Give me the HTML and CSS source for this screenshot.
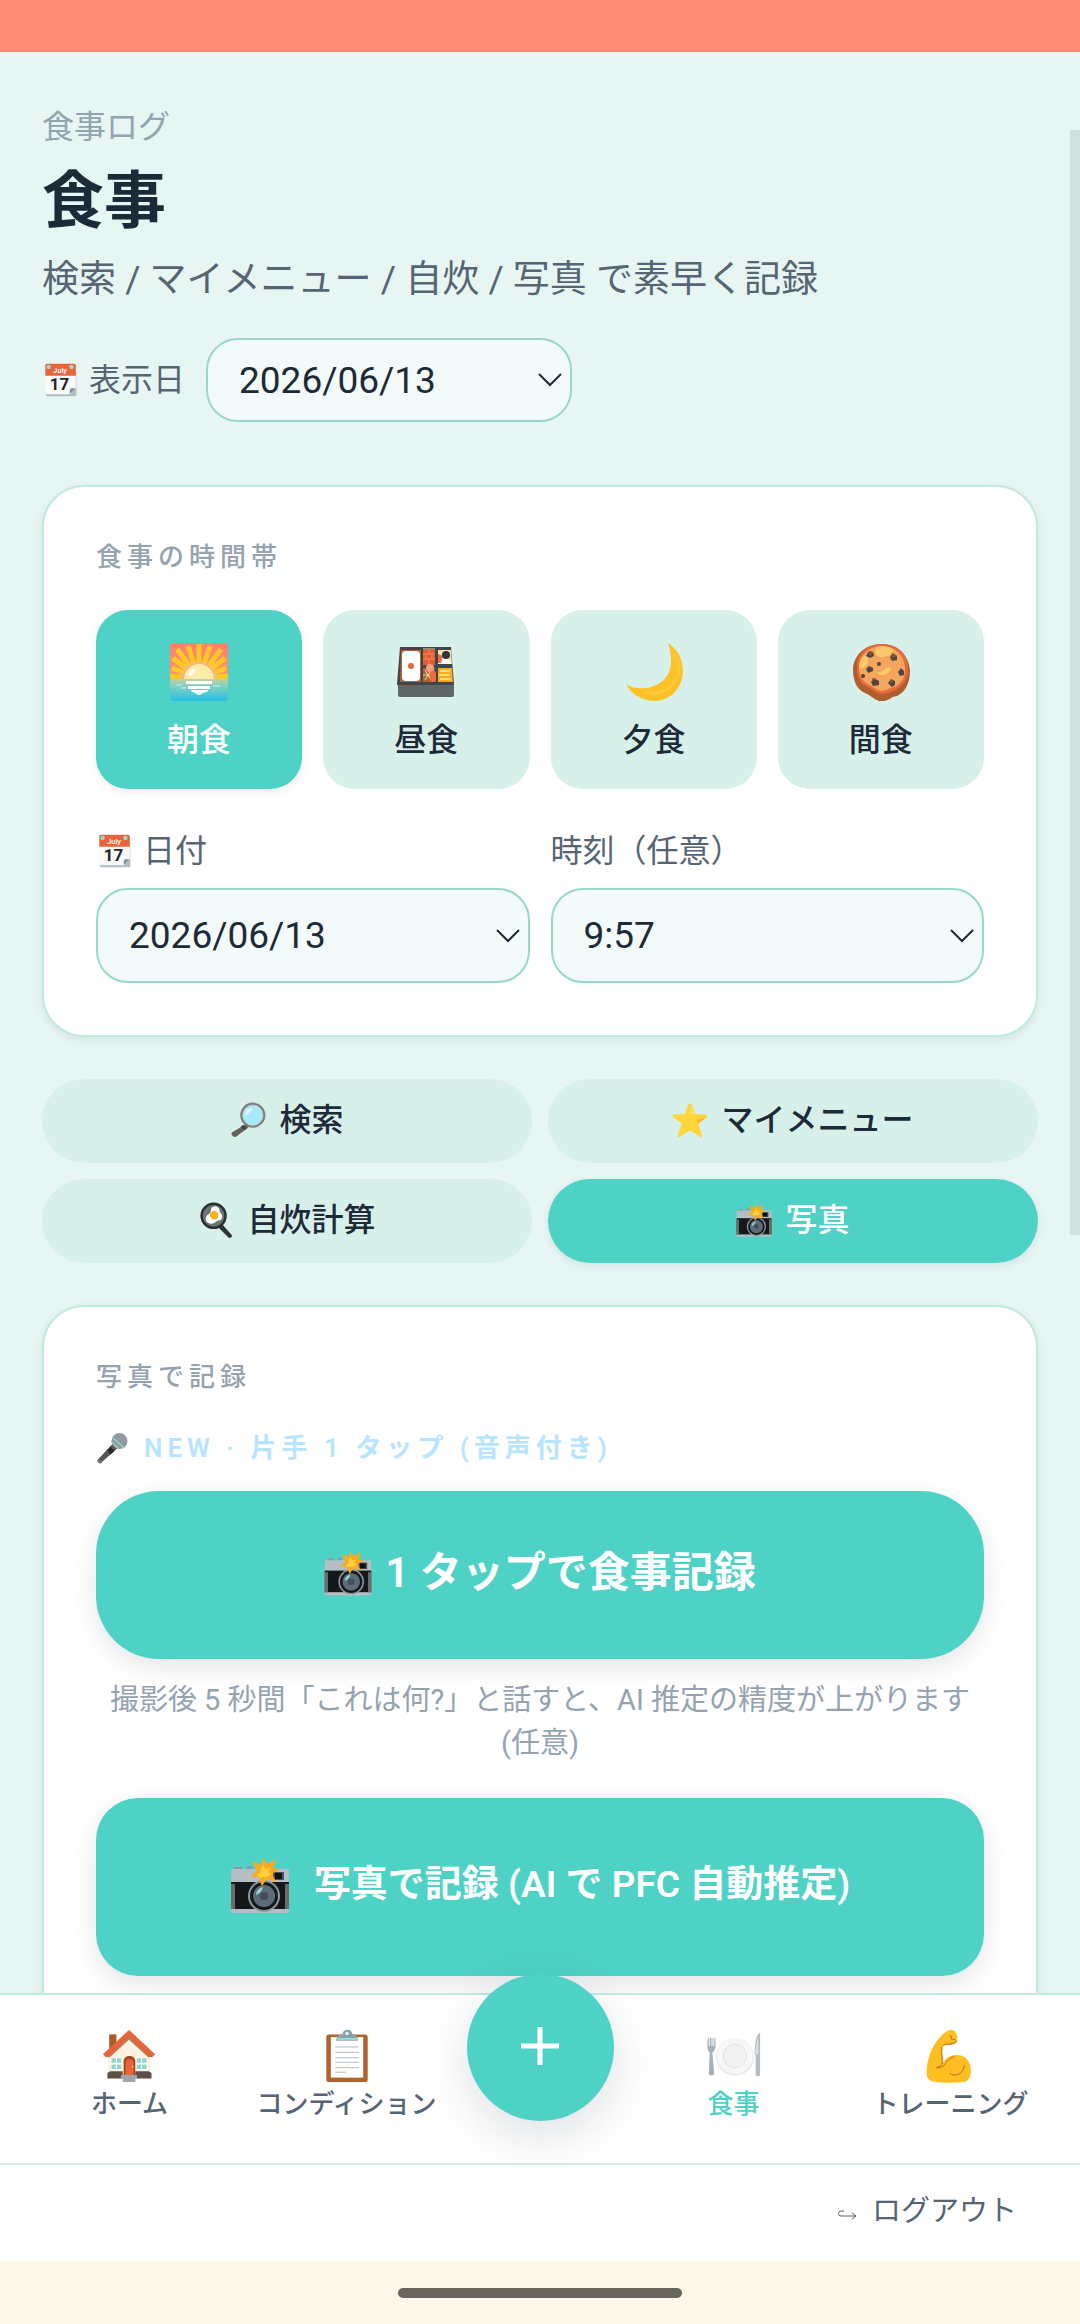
FILE: index.html
```
<!DOCTYPE html>
<html lang="ja">
<head>
    <meta charset="UTF-8">
    <meta name="viewport" content="width=device-width, initial-scale=1">
    <title>食事ログ</title>
    <link rel="stylesheet" href="styles.css">
</head>
<body>

<!-- アイコン定義 -->
<svg class="sprite" aria-hidden="true">
    <defs>
        <linearGradient id="sky" x1="0" y1="0" x2="0" y2="1">
            <stop offset="0" stop-color="#ff7f6e"/>
            <stop offset="1" stop-color="#ffa567"/>
        </linearGradient>
        <linearGradient id="sea" x1="0" y1="0" x2="0" y2="1">
            <stop offset="0" stop-color="#c3cf9f"/>
            <stop offset="0.45" stop-color="#6fcfc2"/>
            <stop offset="1" stop-color="#26bfe8"/>
        </linearGradient>
        <clipPath id="sunClip"><rect x="1" y="1" width="58" height="38"/></clipPath>
    </defs>

    <symbol id="i-calendar" viewBox="-4 -2 66 66">
        <path d="M3 15h56v43a3 3 0 0 1-3 3H6a3 3 0 0 1-3-3z" fill="#b0bec5"/>
        <path d="M2 15h56v31L48 57H5a3 3 0 0 1-3-3z" fill="#fafafa"/>
        <path d="M47 57v-8a3 3 0 0 1 3-3h8z" fill="#82929c"/>
        <path d="M2 4a3 3 0 0 1 3-3h50a3 3 0 0 1 3 3v19H2z" fill="#e8643a"/>
        <circle cx="8" cy="7" r="4" fill="#9adbd3"/>
        <circle cx="50" cy="7" r="4" fill="#9adbd3"/>
    </symbol>

    <symbol id="i-sunrise" viewBox="0 0 60 60">
        <rect x="1" y="1" width="58" height="58" rx="3" fill="url(#sky)"/>
        <g clip-path="url(#sunClip)" fill="none" stroke="#ffca28" stroke-width="5">
            <path d="M30 37V2M30 37 19 4M30 37 8 7M30 37 4 16M30 37 3 26M30 37 1 34M30 37 41 4M30 37 52 7M30 37 56 16M30 37 57 26M30 37 59 34"/>
        </g>
        <path d="M12 38a18 18 0 0 1 36 0z" fill="#f7b58c"/>
        <path d="M15 38a15 16 0 0 1 30 0z" fill="#ffeca6"/>
        <path d="M1 37h58v19a3 3 0 0 1-3 3H4a3 3 0 0 1-3-3z" fill="url(#sea)"/>
        <ellipse cx="23" cy="30" rx="2" ry="4" transform="rotate(35 23 30)" fill="#fff"/>
        <path d="M17 39h26v3H17zM19 44h22v3H19zM22 48h17c0 2-3 2-5 3s-2 2-4 2-2-1-4-2-4-1-4-3z" fill="#fff"/>
        <rect x="7" y="42" width="6" height="2" fill="#a4dff5"/>
        <rect x="12" y="45" width="5" height="2" fill="#a4dff5"/>
        <rect x="44" y="43" width="7" height="2" fill="#a4dff5"/>
    </symbol>

    <symbol id="i-bento" viewBox="0 0 60 60">
        <path d="M2 42h56v11a2 2 0 0 1-2 2H4a2 2 0 0 1-2-2z" fill="#5f6668"/>
        <path d="M4 5h51l3 37v1H1v-1z" fill="#3f474b"/>
        <path d="M5 8h20v32H4z" fill="#b5622f"/>
        <rect x="6" y="9" width="18" height="30" rx="4" fill="#fff"/>
        <circle cx="15" cy="24" r="3" fill="#e8643a"/>
        <path d="M27 8h12v15H27z" fill="#e3592f"/>
        <path d="M27 6h12v2H27z" fill="#a08667"/>
        <path d="M27 12h12M27 17h12M33 8v4M30 12v5M36 12v5M33 17v6" stroke="#f28b5c" fill="none"/>
        <path d="M42 8h13l1 14H42z" fill="#fbdcae"/>
        <path d="M42 22c0-6 5-8 8-6s5 3 5 6z" fill="#fff"/>
        <path d="M42 12l5 2-2 7h-3z" fill="#ef6c45"/>
        <circle cx="50" cy="13" r="4" fill="#2f3437"/>
        <path d="M27 26h12v14H27z" fill="#a9623a"/>
        <path d="M29 28l6 10M35 28l-6 10M27 33h9" stroke="#e6e0a8" fill="none"/>
        <circle cx="34" cy="26" r="4" fill="#f4a080"/>
        <rect x="34" y="29" width="6" height="11" rx="2" fill="#ee6c3c"/>
        <path d="M42 26h14l1 14H42z" fill="#f9a825"/>
        <path d="M44 29h10M43 33h11M44 37h11" stroke="#ffe06b" stroke-width="2" fill="none"/>
    </symbol>

    <symbol id="i-moon" viewBox="0 0 60 60">
        <path d="M44 1C54 8 59 17 59 30 58 47 46 59 30 59 17 58 7 52 2 42c5 4 12 5 21 4C38 43 47 34 47 20c0-8-1-13-3-19z" fill="#ffc124"/>
        <path d="M50 12c6 9 6 22-1 30-7 8-17 11-28 9" stroke="#ffca3a" stroke-width="3" fill="none"/>
    </symbol>

    <symbol id="i-cookie" viewBox="0 0 60 60">
        <path d="M2 27C3 14 12 3 30 2c17 0 27 10 29 26 0 14-5 22-13 26-5 0-7 4-13 5-9 1-12-5-17-7C6 48 2 40 2 27z" fill="#ad5f2f"/>
        <path d="M6 25C6 11 17 2 31 2s26 9 26 25c0 12-7 17-12 21-5 1-8 4-14 4-8-1-9-5-14-7C9 42 6 36 6 25z" fill="#ea6a3c"/>
        <path d="M8 25C9 12 19 4 31 4s23 9 23 23c0 10-5 15-10 18-5 0-8 4-14 4-6-1-8-5-12-6C11 39 8 34 8 25z" fill="#f6a55c"/>
        <path d="M25 6c8-3 15-1 18 2-3 5-9 8-14 7s-5-5-4-9zM8 23c1-5 3-9 6-9s5 4 2 8-6 6-8 4zM27 30c5 1 7-5 12-5 3 2-3 8-7 8-3 0-6-1-5-3z" fill="#fbc86a"/>
        <g fill="#4d4540">
            <path d="M15 14l3-5 4 1 1 4-4 2zM39 15l3-4 4 3v4l-5 1zM15 27l3-3 4 2v3l-5 2zM47 30l3-4 3 3v4l-4 1zM20 40l3-4 5 3v4l-6 1zM37 41l3-4 4 2v4l-3 2z"/>
            <circle cx="28" cy="22" r="2"/>
            <circle cx="12" cy="34" r="2"/>
        </g>
        <path d="M18 10l4 1-3 3zM42 12l4 2-5 2zM21 36l4 1-4 3zM39 38l4 1-4 2z" fill="#8b5a3a"/>
    </symbol>

    <symbol id="i-search" viewBox="0 0 60 60">
        <path d="M26 37l5 5L10 58c-4 2-9-3-7-7z" fill="#66605c"/>
        <path d="M22 38l6 6-4 3-6-6z" fill="#4a4644"/>
        <circle cx="38" cy="22" r="19" fill="#a9eaf8" stroke="#827e7c" stroke-width="4"/>
        <circle cx="38" cy="22" r="17" fill="none" stroke="#c9c9c9"/>
        <path d="M25 22c0-8 6-12 13-12-3 6-7 10-13 12z" fill="#dff7fd"/>
    </symbol>

    <symbol id="i-star" viewBox="0 0 60 60">
        <path d="M30 2c1 0 2 1 3 3l6 15 18 1c3 0 3 2 1 4L44 36l6 20c1 3-1 4-3 2L30 47 13 58c-3 1-4 0-3-3l6-19L2 25c-2-2-2-4 1-4l18-1 6-15c1-2 2-3 3-3z" fill="#fdd63c"/>
        <path d="M58 25L44 36l-3-6z" fill="#f6b922"/>
        <path d="M31 6l5 13-2 1z" fill="#fff59a"/>
    </symbol>

    <symbol id="i-pan" viewBox="0 0 60 60">
        <path d="M34 41l5-4 16 18c2 3-2 5-4 3z" fill="#2b3237" stroke="#2b3237" stroke-width="2"/>
        <circle cx="26" cy="23" r="20" fill="#6b7478" stroke="#272e33" stroke-width="4"/>
        <path d="M25 8c6-3 12 2 11 9 7 4 5 14-2 14-3 0-5 4-9 5-7 1-13-3-12-9 0-6 6-6 8-10 1-4 0-7 4-9z" fill="#fff"/>
        <circle cx="27" cy="22" r="7" fill="#fbb01c"/>
    </symbol>

    <symbol id="i-camera" viewBox="0 0 60 60">
        <path d="M4 12h8v4H4zM17 11h5v4h-5z" fill="#8b979e"/>
        <rect x="1" y="14" width="58" height="44" rx="2" fill="#b4bec4"/>
        <rect x="1" y="27" width="58" height="27" fill="#15181a"/>
        <rect x="1" y="29" width="4" height="25" fill="#6c6a66"/>
        <rect x="55" y="29" width="4" height="25" fill="#6c6a66"/>
        <rect x="43" y="17" width="11" height="8" fill="#4b5459"/>
        <rect x="45" y="18" width="7" height="6" fill="#111"/>
        <circle cx="34" cy="41" r="16" fill="#8f9a9b"/>
        <circle cx="34" cy="41" r="14" fill="#15191c"/>
        <circle cx="34" cy="41" r="11" fill="#5c6c79"/>
        <circle cx="34" cy="41" r="4" fill="#444e57"/>
        <path d="M26 40c0-4 3-7 7-8-1 4-3 6-7 8z" fill="#97d8d1"/>
        <path d="M31 29l-2-7-9 0 7-6-5-10 9 4 2-7 4 6 9-5-3 9 6 1-7 5 4 8-9-3-5 7z" fill="#fbaa1d"/>
        <path d="M31 14l2-4 2 4 5-1-2 4 3 2-4 3h-4l-3 1-3-3 3-2z" fill="#fdd13a"/>
    </symbol>

    <symbol id="i-mic" viewBox="0 0 60 60">
        <path d="M33 20l9 9L10 57c-3 3-9-2-6-6z" fill="#565656"/>
        <path d="M27 27l8 8-8 7-6-7z" fill="#2c2c2c"/>
        <path d="M5 50l7 6-3 3c-3 1-7-3-6-6z" fill="#7a706b"/>
        <circle cx="44" cy="17" r="15" fill="#909aa0"/>
        <path d="M31 10l22 20M29 18l14 13" stroke="#9adbd3" stroke-width="2"/>
    </symbol>

    <symbol id="i-home" viewBox="0 0 60 60">
        <path d="M8 6h8v16H8z" fill="#a85b2c"/>
        <path d="M7 28L30 5l24 23v27H7z" fill="#fdf3e0"/>
        <path d="M8 26L30 6l22 20v6L30 12 8 32z" fill="#a9865c"/>
        <path d="M30 1l29 27-3 3h-4L30 9 8 31H4l-3-3z" fill="#e8643a"/>
        <g fill="#91d5cf" stroke="#fff">
            <path d="M10 32h6v6h-6zM16 32h6v6h-6zM10 39h6v6h-6zM16 39h6v6h-6zM38 32h6v6h-6zM44 32h6v6h-6zM38 39h6v6h-6zM44 39h6v6h-6z"/>
        </g>
        <path d="M24 51V36c0-8 13-8 13 0v15z" fill="#a6461f"/>
        <path d="M26 51V37c0-5 9-5 9 0v14z" fill="#e8643a"/>
        <circle cx="34" cy="42" r="1" fill="#ffc928"/>
        <path d="M6 49l3-2h14v8H6zM37 47h15l3 2v6H37z" fill="#5d4f45"/>
        <path d="M21 51h18v4h-2v4H23v-4h-2z" fill="#9ea6ab"/>
    </symbol>

    <symbol id="i-clipboard" viewBox="0 0 60 60">
        <rect x="7" y="6" width="46" height="53" rx="3" fill="#b0632f"/>
        <rect x="12" y="9" width="36" height="45" fill="#fff"/>
        <path d="M17 20h26M17 26h26M17 32h26M17 37h26M17 43h26M17 48h12" stroke="#a9b6bd"/>
        <path d="M18 13c0-5 3-7 7-7 0-7 11-7 11 0 4 0 6 2 6 7z" fill="#86a3ad"/>
        <circle cx="30" cy="5" r="2" fill="#e6eef0"/>
        <path d="M19 11h22" stroke="#9fdcd6" stroke-width="2"/>
    </symbol>

    <symbol id="i-plate" viewBox="0 0 60 60">
        <circle cx="31" cy="31" r="21" fill="#e4e8e9"/>
        <circle cx="31" cy="30" r="20" fill="#f7f7f7"/>
        <circle cx="31" cy="30" r="13" fill="#f0f1f1" stroke="#dbe2e3"/>
        <path d="M1 10c0-1 1-1 1 0v9h1v-9h2v9h1v-9h1v9h1v-9c1-1 1 0 1 0 1 8 1 14-3 16l2 24c0 2-6 2-6 0l1-24c-3-2-3-8-2-16z" fill="#a7b1b7"/>
        <path d="M59 4v47c0 2-5 2-5 0V29h-1c0-11 1-22 6-25z" fill="#b5bec3"/>
        <path d="M57 9v19h-3c0-8 1-15 3-19z" fill="#dde3e5"/>
    </symbol>

    <symbol id="i-muscle" viewBox="0 0 60 60">
        <path d="M20 8c3-3 7-7 11-7 3 0 6 2 6 5 2 2 1 4 1 7-1 4-4 4-7 4-3 1-8 0-9 3-2 6 1 13 0 18 3-5 8-9 14-9 9-1 16 5 17 14 1 9-2 15-8 16-11 1-24 1-35-1-4-1-6-4-6-9C4 33 10 18 20 8z" fill="#ffbf20"/>
        <path d="M21 20c-1 7 1 13 0 19-1 3-4 2-6 4 4 1 8-1 11-6 3-4 6-6 9-6M29 49c7 5 16 1 17-9M29 8c2-2 4 1 2 3l5 1M31 16c4 1 5-1 6-3M22 19c3-3 6-2 10-2" stroke="#b2612b" fill="none"/>
    </symbol>
</svg>

<div class="app">
    <div class="status-bar"></div>

    <main class="content">
        <header class="page-head">
            <p class="eyebrow">食事ログ</p>
            <h1>食事</h1>
            <p class="subtitle">検索 / マイメニュー / 自炊 / 写真 で素早く記録</p>
            <div class="view-date">
                <label class="field-label" for="viewDate">
                    <svg class="icon icon-sm" viewBox="-4 -2 66 66" aria-hidden="true">
                        <use href="#i-calendar" x="-4" y="-2" width="66" height="66"/>
                        <text x="29" y="18" class="cal-month">July</text>
                        <text x="28" y="49" class="cal-day">17</text>
                    </svg>表示日
                </label>
                <select id="viewDate" class="field field-short">
                    <option>2026/06/13</option>
                </select>
            </div>
        </header>

        <section class="card">
            <h2 class="card-label">食事の時間帯</h2>
            <div class="meals">
                <button type="button" class="meal active"><svg class="icon icon-lg"><use href="#i-sunrise"/></svg>朝食</button>
                <button type="button" class="meal"><svg class="icon icon-lg"><use href="#i-bento"/></svg>昼食</button>
                <button type="button" class="meal"><svg class="icon icon-lg"><use href="#i-moon"/></svg>夕食</button>
                <button type="button" class="meal"><svg class="icon icon-lg"><use href="#i-cookie"/></svg>間食</button>
            </div>
            <div class="fields">
                <div class="form-group">
                    <label class="field-label" for="mealDate">
                        <svg class="icon icon-sm" viewBox="-4 -2 66 66" aria-hidden="true">
                            <use href="#i-calendar" x="-4" y="-2" width="66" height="66"/>
                            <text x="29" y="18" class="cal-month">July</text>
                            <text x="28" y="49" class="cal-day">17</text>
                        </svg>日付
                    </label>
                    <select id="mealDate" class="field">
                        <option>2026/06/13</option>
                    </select>
                </div>
                <div class="form-group">
                    <label class="field-label" for="mealTime">時刻（任意）</label>
                    <select id="mealTime" class="field">
                        <option>9:57</option>
                    </select>
                </div>
            </div>
        </section>

        <div class="tabs">
            <button type="button" class="tab"><svg class="icon icon-sm"><use href="#i-search"/></svg>検索</button>
            <button type="button" class="tab"><svg class="icon icon-sm"><use href="#i-star"/></svg>マイメニュー</button>
            <button type="button" class="tab"><svg class="icon icon-sm"><use href="#i-pan"/></svg>自炊計算</button>
            <button type="button" class="tab active"><svg class="icon icon-sm"><use href="#i-camera"/></svg>写真</button>
        </div>

        <section class="card">
            <h2 class="card-label">写真で記録</h2>
            <p class="new-label"><svg class="icon icon-xs"><use href="#i-mic"/></svg>NEW · 片手 1 タップ (音声付き)</p>
            <button type="button" class="btn btn-pill"><svg class="icon icon-md"><use href="#i-camera"/></svg>1 タップで食事記録</button>
            <p class="hint">撮影後 5 秒間「これは何?」と話すと、AI 推定の精度が上がります (任意)</p>
            <button type="button" class="btn btn-photo"><svg class="icon icon-lg"><use href="#i-camera"/></svg>写真で記録 (AI で PFC 自動推定)</button>
        </section>
    </main>
    <div class="scroll-thumb"></div>

    <footer class="bottom">
        <nav class="nav">
            <a href="#" class="nav-item"><svg class="icon icon-nav"><use href="#i-home"/></svg>ホーム</a>
            <a href="#" class="nav-item"><svg class="icon icon-nav"><use href="#i-clipboard"/></svg>コンディション</a>
            <button type="button" class="fab" aria-label="追加">
                <svg viewBox="0 0 40 44"><path d="M20 1v38M1 20h38"/></svg>
            </button>
            <a href="#" class="nav-item current"><svg class="icon icon-nav"><use href="#i-plate"/></svg>食事</a>
            <a href="#" class="nav-item"><svg class="icon icon-nav"><use href="#i-muscle"/></svg>トレーニング</a>
        </nav>
        <div class="logout-row">
            <a href="#" class="logout">
                <svg class="logout-icon" viewBox="0 0 20 16"><path d="M6 7H3a2 2 0 0 0 0 5h15M14 9l4 3-4 3"/></svg>ログアウト
            </a>
        </div>
    </footer>

    <div class="gesture-bar"><span class="handle"></span></div>
</div>

</body>
</html>
```
FILE: styles.css
```
:root {
    --mint: #4fd2c6;
    --mint-pale: #d7f0ea;
    --bg: #e7f6f3;
    --line: #c1e9df;
    --field-line: #98d8ca;
    --text: #1e2a38;
    --text-mid: #566573;
    --text-soft: #95a3b1;
}

* {
    box-sizing: border-box;
}

body {
    margin: 0;
    font-family: Roboto, "Noto Sans CJK JP", sans-serif;
    color: var(--text);
    background: var(--bg);
}

h1, h2, p {
    margin: 0;
}

button, select {
    font-family: inherit;
    color: inherit;
}

button {
    border: 0;
    cursor: pointer;
}

a {
    color: inherit;
    text-decoration: none;
}

.sprite {
    position: absolute;
    width: 0;
    height: 0;
}

.cal-month, .cal-day {
    font-family: Roboto, sans-serif;
    text-anchor: middle;
}

.cal-month {
    font-size: 14px;
    font-weight: 500;
    fill: #fff;
}

.cal-day {
    font-size: 31px;
    font-weight: 700;
    fill: #20262a;
}

.icon {
    flex: none;
}

.icon-xs { width: 32px; height: 32px; }
.icon-sm { width: 36px; height: 36px; }
.icon-md { width: 48px; height: 48px; }
.icon-lg { width: 60px; height: 60px; }
.icon-nav { width: 54px; height: 54px; }

.app {
    position: relative;
    display: flex;
    flex-direction: column;
    height: 100vh;
}

.status-bar {
    flex: none;
    height: 52px;
    background: #ff8e75;
}

.content {
    flex: 1;
    min-height: 0;
    overflow-y: auto;
    scrollbar-width: none;
    padding: 51px 42px;
}

.scroll-thumb {
    position: absolute;
    top: 130px;
    right: 0;
    width: 10px;
    height: 1105px;
    background: #d2e0dd;
}

/* ヘッダー */
.eyebrow {
    font-size: 32px;
    line-height: 48px;
    color: var(--text-soft);
}

h1 {
    margin-top: 11px;
    font-size: 62px;
    line-height: 80px;
    font-weight: 700;
}

.subtitle {
    margin-top: 12px;
    font-size: 37px;
    line-height: 52px;
    color: var(--text-mid);
}

.view-date {
    display: flex;
    align-items: center;
    gap: 21px;
    margin-top: 32px;
}

.field-label {
    display: flex;
    align-items: center;
    gap: 11px;
    font-size: 32px;
    line-height: 48px;
    color: var(--text-mid);
}

.field {
    appearance: none;
    width: 100%;
    height: 95px;
    padding: 0 31px;
    border: 2px solid var(--field-line);
    border-radius: 32px;
    font-size: 37px;
    background: #f3fbfa url("data:image/svg+xml,%3Csvg xmlns='http://www.w3.org/2000/svg' width='24' height='14' fill='none' stroke='%231e2a38' stroke-width='2'%3E%3Cpath d='M1 1l11 11L23 1'/%3E%3C/svg%3E") no-repeat right 8px center;
}

.field-short {
    width: 366px;
    height: 84px;
}

/* カード */
.card {
    margin-top: 42px;
    padding: 53px 52px 52px;
    border: 2px solid var(--line);
    border-radius: 42px;
    background: #fff;
    box-shadow: 0 3px 8px rgba(30, 42, 56, 0.09);
}

.page-head + .card {
    margin-top: 63px;
}

.card-label {
    font-size: 26px;
    line-height: 34px;
    font-weight: 500;
    letter-spacing: 5px;
    color: var(--text-soft);
}

.meals {
    display: grid;
    grid-template-columns: repeat(4, 1fr);
    gap: 21px;
    margin-top: 36px;
}

.meal {
    display: flex;
    flex-direction: column;
    align-items: center;
    gap: 14px;
    padding: 32px 0 25px;
    border-radius: 32px;
    font-size: 32px;
    line-height: 48px;
    font-weight: 500;
    background: var(--mint-pale);
}

.meal.active, .tab.active {
    color: #fff;
    background: var(--mint);
    box-shadow: 0 3px 8px rgba(30, 42, 56, 0.09);
}

.fields {
    display: grid;
    grid-template-columns: 1fr 1fr;
    gap: 21px;
    margin-top: 38px;
}

.form-group {
    display: flex;
    flex-direction: column;
    gap: 13px;
}

/* タブ */
.tabs {
    display: grid;
    grid-template-columns: 1fr 1fr;
    gap: 16px;
    margin-top: 42px;
}

.tab {
    display: flex;
    align-items: center;
    justify-content: center;
    gap: 13px;
    height: 84px;
    padding: 0 0 2px;
    border-radius: 42px;
    font-size: 32px;
    line-height: 48px;
    font-weight: 500;
    background: var(--mint-pale);
}

/* 写真で記録 */
.new-label {
    display: flex;
    align-items: center;
    gap: 16px;
    margin-top: 36px;
    font-size: 26px;
    line-height: 36px;
    font-weight: 600;
    letter-spacing: 5px;
    color: #b8e4ff;
}

.btn {
    display: flex;
    align-items: center;
    justify-content: center;
    width: 100%;
    padding: 0 0 4px;
    line-height: 56px;
    font-weight: 600;
    color: #fff;
    background: var(--mint);
    box-shadow: 0 8px 24px rgba(30, 42, 56, 0.12);
}

.btn-pill {
    gap: 13px;
    height: 168px;
    margin-top: 25px;
    border-radius: 63px;
    font-size: 42px;
}

.btn-photo {
    gap: 24px;
    height: 178px;
    margin-top: 33px;
    border-radius: 42px;
    font-size: 37px;
}

.hint {
    margin-top: 20px;
    font-size: 29px;
    line-height: 43px;
    text-align: center;
    color: var(--text-soft);
}

/* 下部ナビ */
.bottom {
    position: relative;
    flex: none;
    border-top: 2px solid var(--line);
    background: #fff;
}

.nav {
    display: grid;
    grid-template-columns: 1fr 1fr 170px 1fr 1fr;
    justify-items: center;
    height: 168px;
    padding: 0 21px;
}

.nav-item {
    display: flex;
    flex-direction: column;
    align-items: center;
    gap: 3px;
    padding-top: 34px;
    font-size: 26px;
    line-height: 36px;
    font-weight: 500;
    white-space: nowrap;
    color: var(--text-mid);
}

.nav-item.current {
    color: var(--mint);
}

.fab {
    display: flex;
    align-items: center;
    justify-content: center;
    width: 147px;
    height: 147px;
    margin-top: -21px;
    border-radius: 50%;
    background: var(--mint);
    box-shadow: 0 16px 48px rgba(30, 42, 56, 0.14);
}

.fab svg {
    width: 40px;
    height: 44px;
    fill: none;
    stroke: #fff;
    stroke-width: 5;
}

.logout-row {
    display: flex;
    justify-content: flex-end;
    align-items: center;
    height: 98px;
    padding: 0 63px 3px;
    border-top: 2px solid var(--mint-pale);
}

.logout {
    display: flex;
    align-items: center;
    gap: 14px;
    font-size: 29px;
    line-height: 43px;
    color: var(--text-mid);
}

.logout-icon {
    width: 20px;
    height: 16px;
    fill: none;
    stroke: currentColor;
}

.gesture-bar {
    display: flex;
    flex: none;
    align-items: center;
    justify-content: center;
    height: 63px;
    background: #fdf8ea;
}

.handle {
    width: 284px;
    height: 10px;
    border-radius: 5px;
    background: #66655f;
}
```
